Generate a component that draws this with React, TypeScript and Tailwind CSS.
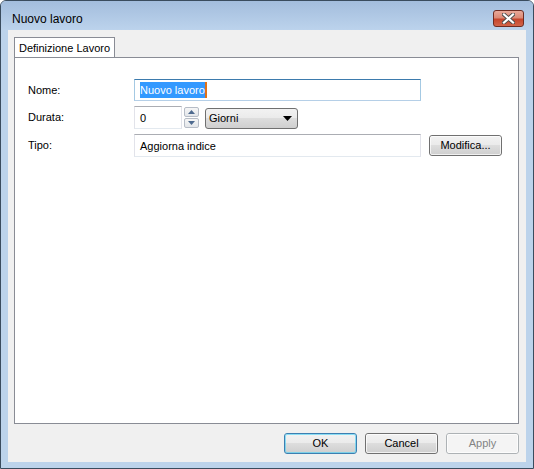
const font = "font-['Liberation_Sans',Arial,sans-serif]"

function Win7Button({ label, isDefault, disabled, className }: { label: string; isDefault?: boolean; disabled?: boolean; className?: string }) {
	const border = disabled ? "border-[#adb2b5]" : isDefault ? "border-[#3c7fb1]" : "border-[#707070]"
	const bg = disabled
		? "bg-[#f4f4f4]"
		: "bg-[linear-gradient(to_bottom,#f2f2f2_0%,#ebebeb_45%,#dddddd_50%,#cfcfcf_100%)]"
	return (
		<div
			className={`flex h-[21px] w-[73px] items-center justify-center rounded-[3px] border ${border} ${bg} ${className ?? ""}`}
		>
			<div
				className={`flex h-full w-full items-center justify-center rounded-[2px] border ${isDefault ? "border-[#48d0f7]/60" : "border-white/70"} text-[11px] ${disabled ? "text-[#838383]" : "text-black"}`}
			>
				{label}
			</div>
		</div>
	)
}

function CloseButton() {
	return (
		<div className="flex h-[17px] w-[31px] items-center justify-center rounded-[3px] border border-[#6e2c22] bg-[linear-gradient(to_bottom,#e9a99a_0%,#dc8a76_45%,#c6452c_55%,#d2654a_100%)]">
			<svg width="13" height="11" viewBox="0 0 13 11">
				<path d="M2 1.5 L11 9.5 M11 1.5 L2 9.5" stroke="#4b4b4b" strokeWidth="4" strokeLinecap="square" />
				<path d="M2 1.5 L11 9.5 M11 1.5 L2 9.5" stroke="#ffffff" strokeWidth="2.2" strokeLinecap="square" />
			</svg>
		</div>
	)
}

function SpinButtons() {
	return (
		<div className="ml-[2px] flex h-[22px] w-[15px] flex-col gap-[1px]">
			<div className="flex h-[10px] items-center justify-center rounded-[2px] border border-[#b6bcc6] bg-[linear-gradient(to_bottom,#f6f6f6,#e3e6ea)]">
				<svg width="7" height="4" viewBox="0 0 7 4">
					<path d="M0 4 L3.5 0 L7 4 Z" fill="#4e6a8f" />
				</svg>
			</div>
			<div className="flex h-[10px] items-center justify-center rounded-[2px] border border-[#b6bcc6] bg-[linear-gradient(to_bottom,#f6f6f6,#e3e6ea)]">
				<svg width="7" height="4" viewBox="0 0 7 4">
					<path d="M0 0 L7 0 L3.5 4 Z" fill="#4e6a8f" />
				</svg>
			</div>
		</div>
	)
}

export default function App() {
	return (
		<div className={`${font} flex h-[469px] w-[534px] flex-col rounded-t-[6px] border border-[#3a4c5e] bg-[#bcd3eb] px-[7px] pb-[6px]`}>
			{/* title bar */}
			<div className="-mx-[7px] flex h-[29px] items-start justify-between rounded-t-[5px] bg-[linear-gradient(to_bottom,#a3bddd,#bcd3ec)] pl-[11px] pr-[9px]">
				<span className="mt-[11px] text-[12px] leading-[14px] text-black">Nuovo lavoro</span>
				<div className="mt-[9px]">
					<CloseButton />
				</div>
			</div>

			{/* client area */}
			<div className="flex flex-1 flex-col bg-[#f0f0f0] pl-[6px] pr-[7px] pt-[7px]">
				<div className="flex h-[20px] items-end">
					<div className="-mb-px flex h-[21px] w-[101px] items-center justify-center border border-b-0 border-[#898c95] bg-white text-[11px] text-black">
						Definizione Lavoro
					</div>
				</div>
				<div className="flex flex-1 flex-col border border-[#898c95] bg-white pl-[13px] pt-[21px] text-[11px] text-black">
					{/* Nome */}
					<div className="flex h-[22px] items-center">
						<span className="w-[106px]">Nome:</span>
						<div className="flex h-[22px] w-[287px] items-center border border-[#3d7bad] border-x-[#a4c9e3] border-b-[#b5cfe7] pl-[5px]">
							<span className="bg-[#3399ff] leading-[16px] text-white">Nuovo lavoro</span>
							<span className="h-[16px] w-[2px] bg-[#e07118]" />
						</div>
					</div>
					{/* Durata */}
					<div className="mt-[5px] flex h-[23px] items-center">
						<span className="w-[106px]">Durata:</span>
						<div className="flex h-[23px] w-[48px] items-start border border-[#abadb3] border-x-[#e2e3ea] border-b-[#e3e9ef] pl-[5px] pt-[3px]">
							0
						</div>
						<SpinButtons />
						<div className="ml-[6px] mt-[2px] flex h-[21px] w-[93px] items-center justify-between rounded-[3px] border border-[#707070] bg-[linear-gradient(to_bottom,#f2f2f2_0%,#ebebeb_45%,#dddddd_50%,#cfcfcf_100%)] pl-[3px] pr-[5px]">
							<span>Giorni</span>
							<svg width="9" height="5" viewBox="0 0 9 5">
								<path d="M0 0 L9 0 L4.5 5 Z" fill="#000" />
							</svg>
						</div>
					</div>
					{/* Tipo */}
					<div className="mt-[5px] flex h-[23px] items-center">
						<span className="w-[106px]">Tipo:</span>
						<div className="flex h-[23px] w-[287px] items-start border border-[#abadb3] border-x-[#e2e3ea] border-b-[#e3e9ef] pl-[5px] pt-[3px]">
							Aggiorna indice
						</div>
						<Win7Button label="Modifica..." className="ml-[8px]" />
					</div>
				</div>

				{/* bottom buttons */}
				<div className="mb-[8px] mt-[9px] flex justify-end gap-[8px]">
					<Win7Button label="OK" isDefault />
					<Win7Button label="Cancel" />
					<Win7Button label="Apply" disabled />
				</div>
			</div>
		</div>
	)
}
